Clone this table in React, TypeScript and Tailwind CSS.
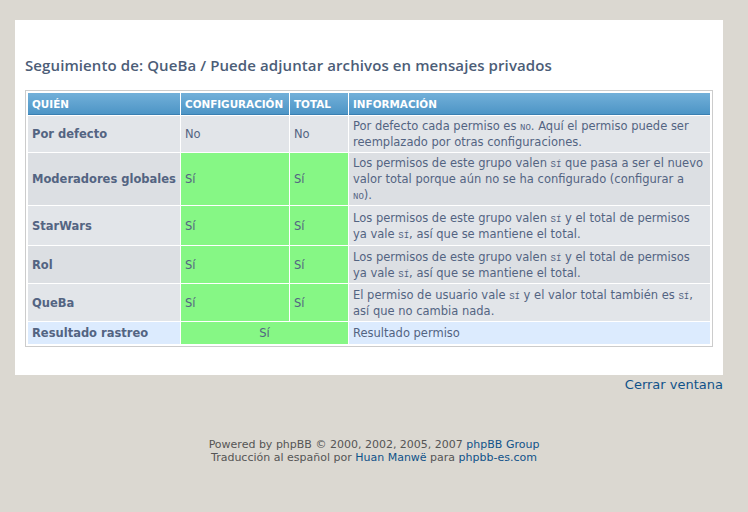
import React from 'react';

type Row = {
  who: string;
  config?: string;
  total?: string;
  info: React.ReactNode;
  green: boolean;
  alt: boolean;
  pad: string;
};

const Sc = ({ children }: { children: React.ReactNode }) => (
  <span className="font-['Liberation_Mono',monospace] text-[9px] uppercase leading-none">{children}</span>
);

const rows: Row[] = [
  {
    who: 'Por defecto',
    config: 'No',
    total: 'No',
    green: false,
    alt: false,
    pad: 'py-[2px]',
    info: (
      <>
        Por defecto cada permiso es <Sc>no</Sc>. Aquí el permiso puede ser reemplazado por otras configuraciones.
      </>
    ),
  },
  {
    who: 'Moderadores globales',
    config: 'Sí',
    total: 'Sí',
    green: true,
    alt: true,
    pad: 'py-[2px]',
    info: (
      <>
        Los permisos de este grupo valen <Sc>sí</Sc> que pasa a ser el nuevo valor total porque aún no se ha configurado (configurar a <Sc>no</Sc>).
      </>
    ),
  },
  {
    who: 'StarWars',
    config: 'Sí',
    total: 'Sí',
    green: true,
    alt: false,
    pad: 'pt-[4px] pb-[3px]',
    info: (
      <>
        Los permisos de este grupo valen <Sc>sí</Sc> y el total de permisos ya vale <Sc>sí</Sc>, así que se mantiene el total.
      </>
    ),
  },
  {
    who: 'Rol',
    config: 'Sí',
    total: 'Sí',
    green: true,
    alt: true,
    pad: 'pt-[3px] pb-[2px]',
    info: (
      <>
        Los permisos de este grupo valen <Sc>sí</Sc> y el total de permisos ya vale <Sc>sí</Sc>, así que se mantiene el total.
      </>
    ),
  },
  {
    who: 'QueBa',
    config: 'Sí',
    total: 'Sí',
    green: true,
    alt: false,
    pad: 'pt-[3px] pb-[2px]',
    info: (
      <>
        El permiso de usuario vale <Sc>sí</Sc> y el valor total también es <Sc>sí</Sc>, así que no cambia nada.
      </>
    ),
  },
];

export default function App() {
  return (
    <div className="min-h-[512px] bg-[#dbd8d1] pt-[20px] pb-[40px] font-['DejaVu_Sans',Verdana,sans-serif] text-[#536482]">
      {/* Main panel */}
      <div className="ml-[15px] mr-[25px] bg-white px-[10px] pt-[35px] pb-[28px]">
        <h1 className="mb-[15px] font-['Open_Sans',sans-serif] text-[15px] font-semibold leading-[20px] tracking-[0.1px] text-[#4c5d77]">
          Seguimiento de: QueBa / Puede adjuntar archivos en mensajes privados
        </h1>

        <div className="border border-[#cccccc] p-[1px]">
          <table className="w-full table-fixed border-separate border-spacing-[1px] text-[11.5px] leading-[16px]">
            <colgroup>
              <col className="w-[152px]" />
              <col className="w-[108px]" />
              <col className="w-[58px]" />
              <col />
            </colgroup>
            <thead>
              <tr className="h-[22px] text-left text-[10.4px] font-bold uppercase text-white">
                {['Quién', 'Configuración', 'Total', 'Información'].map((h) => (
                  <th
                    key={h}
                    className="border-b border-[#3a7fb1] bg-gradient-to-b from-[#72b0d9] to-[#4d95c6] px-[4px] py-0 align-middle"
                  >
                    {h}
                  </th>
                ))}
              </tr>
            </thead>
            <tbody>
              {rows.map((r) => {
                const rowBg = r.alt ? 'bg-[#dcdfe3]' : 'bg-[#e2e5e9]';
                const cellBg = r.green ? 'bg-[#86f785]' : rowBg;
                return (
                  <tr key={r.who}>
                    <td className={`${rowBg} ${r.pad} px-[4px] align-middle font-bold`}>{r.who}</td>
                    <td className={`${cellBg} ${r.pad} px-[4px] align-middle`}>{r.config}</td>
                    <td className={`${cellBg} ${r.pad} px-[4px] align-middle`}>{r.total}</td>
                    <td className={`${rowBg} ${r.pad} px-[4px] align-middle`}>{r.info}</td>
                  </tr>
                );
              })}
              <tr>
                <td className="bg-[#dcebfe] px-[4px] py-[3px] font-bold">Resultado rastreo</td>
                <td colSpan={2} className="bg-[#86f785] px-[4px] py-[3px] text-center">
                  Sí
                </td>
                <td className="bg-[#dcebfe] px-[4px] py-[3px]">Resultado permiso</td>
              </tr>
            </tbody>
          </table>
        </div>
      </div>

      <div className="mr-[25px] mt-[1px] text-right text-[13px] leading-[18px] text-[#105289]">
        <a href="#">Cerrar ventana</a>
      </div>

      {/* Footer */}
      <div className="mt-[44px] text-center text-[11px] leading-[13px] text-[#555555]">
        <div>
          Powered by phpBB © 2000, 2002, 2005, 2007 <span className="text-[#105289]">phpBB Group</span>
        </div>
        <div>
          Traducción al español por <span className="text-[#105289]">Huan Manwë</span> para{' '}
          <span className="text-[#105289]">phpbb-es.com</span>
        </div>
      </div>
    </div>
  );
}
